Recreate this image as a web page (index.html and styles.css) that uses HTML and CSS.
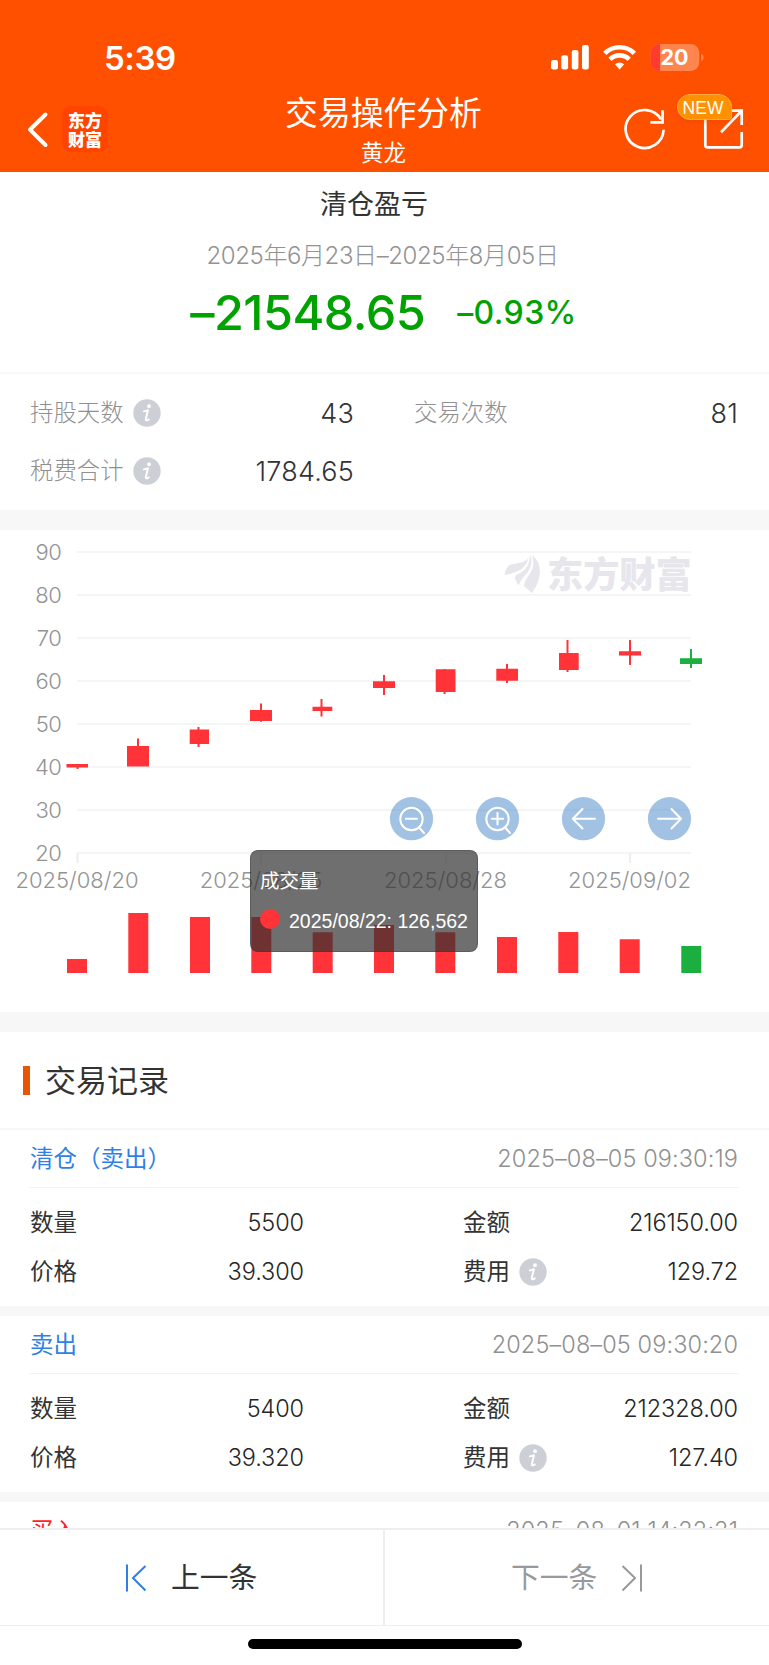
FILE: index.html
```html
<!DOCTYPE html>
<html lang="zh-CN">
<head>
<meta charset="utf-8">
<title>交易操作分析</title>
<link rel="stylesheet" href="styles.css">
</head>
<body>
<div class="screen">
  <header class="header">
    <div class="status">
      <span class="clock">5:39</span>
      <svg class="status-icons" width="156" height="32" viewBox="0 0 156 32">
        <g fill="#fff">
          <rect x="0" y="19" width="7" height="9.5" rx="2.2"/>
          <rect x="10.3" y="14.3" width="6.8" height="14.2" rx="2.2"/>
          <rect x="20.8" y="9" width="6.6" height="19.5" rx="2.2"/>
          <rect x="31" y="4" width="6.8" height="24.5" rx="2.2"/>
        </g>
        <g fill="none" stroke="#fff" stroke-width="4.6">
          <path d="M53.8 12.3 A21 21 0 0 1 83.4 12.3"/>
          <path d="M59 18.3 A13.8 13.8 0 0 1 78.2 18.3"/>
        </g>
        <path d="M64 23.3 Q68.6 19.6 73.2 23.3 L68.6 28.4Z" fill="#fff"/>
        <rect x="99.7" y="3" width="48.5" height="27" rx="8.5" fill="#ff854f"/>
        <path d="M108.5 3 H109 V30 H108.2 A8.5 8.5 0 0 1 99.7 21.5 V11.5 A8.5 8.5 0 0 1 108.2 3Z" fill="#ff3b30"/>
        <path d="M150 13 Q152.7 13.6 152.7 16.5 T150 20.3Z" fill="#ff854f"/>
        <text x="123.6" y="24.4" class="battery-text">20</text>
      </svg>
    </div>
    <div class="nav">
      <svg class="back" width="24" height="38" viewBox="0 0 24 38"><path d="M19.5 4.5 L4 19.7 L19.5 35" fill="none" stroke="#fff" stroke-width="4" stroke-linecap="round" stroke-linejoin="round"/></svg>
      <div class="brand"><span>东方</span><span>财富</span></div>
      <div class="titles"><h1>交易操作分析</h1><p>黄龙</p></div>
      <div class="actions">
        <svg width="126" height="60" viewBox="0 0 126 60" fill="none" stroke="#fff" stroke-width="2.7">
          <path d="M40.6 39.8 A19 19 0 1 1 38 29.4"/>
          <path d="M39.6 20.3 V32.4 H27.4"/>
          <path d="M82.3 28 V55 Q82.3 57.3 84.6 57.3 H116.4 Q118.7 57.3 118.7 55 V42"/>
          <path d="M107 20.7 H118.7 V35 M98 42.2 L118 21.5"/>
        </svg>
        <span class="badge">NEW</span>
      </div>
    </div>
  </header>

  <main class="content">
    <section class="summary">
      <h2>清仓盈亏</h2>
      <p class="range">2025年6月23日–2025年8月05日</p>
      <div class="profit"><span class="amount">–21548.65</span><span class="percent">–0.93%</span></div>
    </section>
    <section class="stats">
      <div class="stat"><span>持股天数</span><svg class="info" viewBox="0 0 28 28"><use href="#info"/></svg><b>43</b></div>
      <div class="stat"><span>交易次数</span><b>81</b></div>
      <div class="stat"><span>税费合计</span><svg class="info" viewBox="0 0 28 28"><use href="#info"/></svg><b>1784.65</b></div>
    </section>

    <section class="chart">
      <svg width="769" height="482" viewBox="0 530 769 482">
        <defs>
          <g id="info"><circle cx="14" cy="14" r="13.7" fill="#ccd0d6"/><circle cx="16" cy="7.2" r="1.9" fill="#fff"/><path d="M10.8 12.4 Q13.2 12.1 15 11.2 L12.8 20 Q12.5 22.6 15.8 20.4" fill="none" stroke="#fff" stroke-width="1.9" stroke-linecap="round" stroke-linejoin="round"/></g>
        </defs>
        <path class="grid" d="M77 552H691M77 595H691M77 638H691M77 681H691M77 724H691M77 767H691M77 810H691M77 853H691"/>
        <path class="ticks" d="M77.5 853V863M261 853V863M446 853V863M630 853V863"/>
        <g class="axis y-axis">
          <text x="61.5" y="560">90</text><text x="61.5" y="603">80</text><text x="61.5" y="646">70</text><text x="61.5" y="689">60</text>
          <text x="61.5" y="732">50</text><text x="61.5" y="775">40</text><text x="61.5" y="818">30</text><text x="61.5" y="861">20</text>
        </g>
        <g class="axis x-axis">
          <text x="77" y="888">2025/08/20</text><text x="261" y="888">2025/08/25</text><text x="445.5" y="888">2025/08/28</text><text x="629.5" y="888">2025/09/02</text>
        </g>
        <g fill="#e6e6ec">
          <path d="M505 575 Q505 567 511 564.5 L523 562 Q528 560 529 555.5 Q527 567 518 571 Q511 574 505 575Z"/>
          <path d="M515 579 Q514 575 520 573 Q530 568 530 555 Q534 562 528 572 Q521 579 518.5 585.5Z"/>
          <path d="M524 586 Q524 582 529 575 Q536 566 532 555 Q540 561 540 572 Q539 584 532 593Z"/>
          <text x="547" y="588" class="watermark">东方财富</text>
        </g>
        <g class="up">
          <path d="M66.5 764H88V767.5H66.5ZM76.5 766H78.5V769H76.5Z"/>
          <path d="M127 746H149V766.5H127ZM137 738.5H139V750H137Z"/>
          <path d="M189.7 729.5H209V744H189.7ZM197.5 727H199.5V747H197.5Z"/>
          <path d="M250 710H272V721H250ZM260 703.5H262V721.8H260Z"/>
          <path d="M312.5 706.7H332.3V711H312.5ZM320.5 699H322.5V716.5H320.5Z"/>
          <path d="M373 681.3H395V688H373ZM383 675H385V695H383Z"/>
          <path d="M435.7 669.3H455.5V692H435.7ZM443.5 669H445.5V694H443.5Z"/>
          <path d="M496.3 668.7H518V680.7H496.3ZM506 664H508V683H506Z"/>
          <path d="M559 653H578.7V670H559ZM566.5 640H568.5V672H566.5Z"/>
          <path d="M619 651.3H641V655.5H619ZM629 640H631V665H629Z"/>
          <path d="M67 959H87V973H67ZM128.3 913H148.3V973H128.3ZM190 917H210V973H190ZM251.3 917H271.3V973H251.3ZM312.7 932.3H332.7V973H312.7ZM374 925H394V973H374ZM435.3 932.3H455.3V973H435.3ZM497 937H517V973H497ZM558.3 932H578.3V973H558.3ZM619.7 939.3H639.7V973H619.7Z"/>
        </g>
        <path class="down" d="M680 658.3H702V664H680ZM690 649H692V668H690ZM681.3 946H701.3V973H681.3Z"/>
        <g class="controls">
          <circle cx="411.5" cy="818.7" r="21.6"/><circle cx="497.5" cy="818.7" r="21.6"/><circle cx="583.5" cy="818.7" r="21.6"/><circle cx="669.5" cy="818.7" r="21.6"/>
        </g>
        <g class="control-icons">
          <circle cx="411.5" cy="819" r="11.2"/><path d="M405.8 818.7H417M418.7 827L424 833"/>
          <circle cx="497.5" cy="819" r="11.2"/><path d="M491.8 818.7H503.2M497.5 813V824.5M504.7 827L510 833"/>
          <path d="M595 818.7H573M582.5 809L572.8 818.7L582.5 828.5"/>
          <path d="M658 818.7H680M671.5 809L681 818.7L671.5 828.5"/>
        </g>
      </svg>
      <div class="tooltip"><p>成交量</p><div class="tooltip-row"><i></i><span>2025/08/22: 126,562</span></div></div>
    </section>

    <section class="records">
      <h3><span>交易记录</span></h3>
      <article class="record">
        <div class="record-head"><span class="sell">清仓（卖出）</span><time>2025–08–05 09:30:19</time></div>
        <div class="record-grid">
          <span>数量</span><b>5500</b><span class="second">金额</span><b>216150.00</b>
          <span>价格</span><b>39.300</b><span class="second">费用<svg class="info" viewBox="0 0 28 28"><use href="#info"/></svg></span><b>129.72</b>
        </div>
      </article>
      <article class="record">
        <div class="record-head"><span class="sell">卖出</span><time>2025–08–05 09:30:20</time></div>
        <div class="record-grid">
          <span>数量</span><b>5400</b><span class="second">金额</span><b>212328.00</b>
          <span>价格</span><b>39.320</b><span class="second">费用<svg class="info" viewBox="0 0 28 28"><use href="#info"/></svg></span><b>127.40</b>
        </div>
      </article>
      <article class="record">
        <div class="record-head"><span class="buy">买入</span><time>2025–08–01 14:22:21</time></div>
      </article>
    </section>
  </main>

  <footer class="footer">
    <div class="pager">
      <div class="prev"><svg width="22" height="28" viewBox="0 0 22 28" fill="none" stroke="#2f7fe6" stroke-width="2"><path d="M2 .5V27.5M20.5 2L8 14L20.5 26.5"/></svg><span>上一条</span></div>
      <div class="next"><span>下一条</span><svg width="22" height="28" viewBox="0 0 22 28" fill="none" stroke="#999" stroke-width="2"><path d="M20 .5V27.5M1.5 2L14 14L1.5 26.5"/></svg></div>
    </div>
    <div class="home"></div>
  </footer>
</div>
</body>
</html>
```
FILE: styles.css
```css
* { box-sizing: border-box; margin: 0; padding: 0; }
body { margin: 0; background: #fff; }
b, h1, h2, h3 { font-weight: inherit; }
.screen {
  width: 769px; height: 1665px; overflow: hidden;
  display: flex; flex-direction: column;
  background: #fff; color: #333;
  font-family: Inter, "Noto Sans CJK SC", sans-serif; font-weight: 400;
}
.header { height: 172px; flex: none; background: #ff5000; color: #fff; }
.status { height: 90px; padding: 41px 62px 0 104px; display: flex; justify-content: space-between; }
.clock { font-size: 33px; line-height: 34px; font-weight: 600; letter-spacing: -0.4px; }
.battery-text { font: 700 21.5px Inter, sans-serif; fill: #fff; text-anchor: middle; }
.nav { height: 82px; display: flex; padding-left: 26px; }
.back { margin-top: 20px; }
.brand {
  width: 46px; height: 46px; margin: 16px 0 0 12px; border-radius: 9px; background: #ff4400;
  font: 900 17px "Noto Sans CJK SC", sans-serif;
  display: flex; flex-direction: column; align-items: center; justify-content: center;
}
.brand span { line-height: 19.5px; height: 19.5px; }
.titles { flex: 1; text-align: center; padding-left: 36px; }
.titles h1 { font-size: 32.8px; line-height: 46px; height: 46px; }
.titles p { font-size: 22.5px; line-height: 33px; }
.actions { width: 146px; position: relative; }
.badge {
  position: absolute; left: 54px; top: 4px; width: 55px; height: 26px;
  border: 1px solid #ffa940; border-radius: 13px 13px 3px 13px; background: #ff9000;
  box-shadow: 0 2px 4px rgba(200, 60, 0, .25);
  font: 400 17.5px/26px "Liberation Sans", sans-serif; text-align: center; padding-right: 3px;
}
.content { height: 1356px; flex: none; overflow: hidden; }
.summary { height: 202px; border-bottom: 2px solid #f7f7f7; text-align: center; padding-top: 14px; }
.summary h2 { font-size: 27px; line-height: 38px; padding-right: 21px; }
.range { margin-top: 14px; font-size: 24px; line-height: 36px; color: #939393; font-weight: 300; letter-spacing: -0.4px; padding-right: 4px; }
.profit { display: flex; justify-content: center; align-items: center; gap: 32px; height: 76px; color: #00a200; font-weight: 500; padding-right: 2px; }
.amount { font-size: 48.5px; letter-spacing: -0.5px; }
.percent { font-size: 32px; letter-spacing: .4px; }
.stats { height: 136px; padding: 10px 31px 0 30px; display: grid; grid-template-columns: 324px 323px; column-gap: 60px; grid-auto-rows: 58px; }
.stat { display: flex; align-items: center; font-size: 23.4px; color: #909090; font-weight: 300; }
.stat:nth-child(2) { width: 324px; }
.stat span { margin-top: -4px; }
.stat b { margin-left: auto; font-size: 27px; color: #333; letter-spacing: 0.2px; }
.info { width: 28px; height: 28px; margin-left: 9px; flex: none; }
.chart { height: 522px; border: solid #f7f7f7; border-width: 20px 0; position: relative; }
.chart > svg { display: block; }
.grid { stroke: #f5f5f6; stroke-width: 2; }
.ticks { stroke: #eee; stroke-width: 2; }
.axis { fill: #939393; font: 300 22px Inter, sans-serif; }
.y-axis { text-anchor: end; letter-spacing: -0.4px; }
.x-axis { text-anchor: middle; }
.watermark { font: 900 36.2px "Noto Sans CJK SC", sans-serif; }
.up { fill: #ff3338; }
.down { fill: #1aaf3e; }
.controls { fill: #4886cb; opacity: .5; }
.control-icons { fill: none; stroke: #fff; stroke-width: 2; stroke-linecap: round; stroke-linejoin: round; }
.tooltip {
  position: absolute; left: 250px; top: 320px; width: 228px; height: 102px;
  border-radius: 8px; background: rgba(50, 50, 50, .7); border: 1px solid rgba(51, 51, 51, .3);
  color: #fff; padding: 15px 9px 0; font: 400 19.5px "Liberation Sans", "Noto Sans CJK SC", sans-serif;
}
.tooltip p { line-height: 30px; }
.tooltip-row { display: flex; align-items: center; height: 45px; margin-top: 2px; white-space: nowrap; }
.tooltip-row i { width: 20px; height: 20px; border-radius: 50%; background: #ff3338; margin: 0 9px 4px 0; }
.tooltip-row span { margin-top: 2px; }
.records h3 { height: 98px; padding-left: 23px; display: flex; align-items: center; font-size: 31px; border-bottom: 2px solid #f7f7f7; }
.records h3::before { content: ""; width: 7px; height: 29px; background: #e95504; margin-right: 15px; }
.records h3 span { margin-top: -4px; }
.record { height: 186px; border-bottom: 10px solid #f7f7f7; font-size: 23.5px; }
.record-head { height: 58px; margin: 0 30px 0 29px; padding: 0 1px 1px; display: flex; justify-content: space-between; align-items: center; border-bottom: 1px solid #f1f2f3; }
.record-head span { margin-top: -3px; }
.sell { color: #2f7fe6; }
.buy { color: #f22; }
.record time { color: #909090; font-weight: 300; letter-spacing: 0.1px; }
.record-grid { padding: 10px 31px 0 30px; display: grid; grid-template-columns: 100px 174px 1fr 140px; grid-auto-rows: 49px; align-items: center; line-height: 28px; }
.record-grid b { text-align: right; font-weight: 300; letter-spacing: -0.1px; color: #262626; }
.record-grid span { margin-top: 1px; }
.second { padding-left: 159px; display: flex; align-items: center; white-space: nowrap; }
.footer { flex: 1; background: #fff; }
.pager { height: 98px; border: solid #eee; border-width: 2px 0 1px; display: flex; font-size: 28.8px; }
.pager span { margin-top: -5px; }
.prev, .next { flex: 1; display: flex; align-items: center; gap: 24px; }
.prev { padding-left: 125px; border-right: 2px solid #eee; }
.next { padding-left: 126px; color: #999; }
.home { width: 274px; height: 10px; margin: 13px auto 0; border-radius: 5px; background: #000; }
```
